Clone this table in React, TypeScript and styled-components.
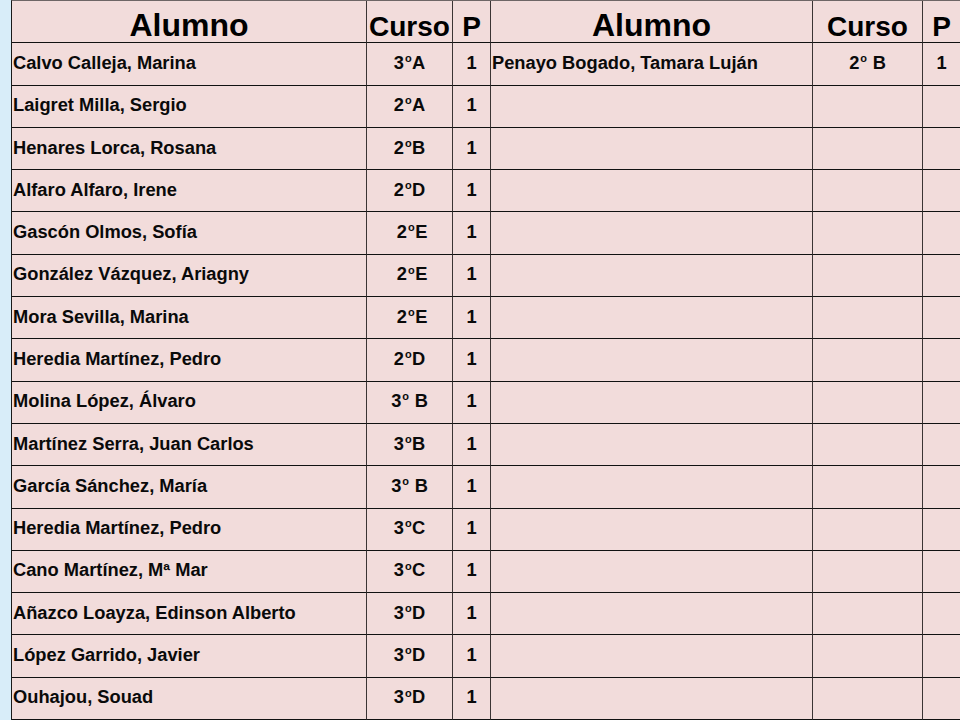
import React from "react";
import styled, { createGlobalStyle } from "styled-components";

const Global = createGlobalStyle`
  html, body { margin: 0; padding: 0; background: #f2dcdb; overflow: hidden; }
  body { font-family: "Liberation Sans", Arial, sans-serif; }
`;

const Page = styled.div`
  display: flex;
  width: 960px;
  height: 720px;
`;

const Strip = styled.div`
  width: 11px;
  flex: none;
  background: #d8edf9;
`;

const Table = styled.div`
  flex: 1;
  display: grid;
  grid-template-columns: 355px 86px 38px 322px 110px 37px;
  grid-template-rows: repeat(17, 1fr);
  height: 720px;
  box-sizing: border-box;
  border-left: 1px solid #1a1a1a;
  border-top: 1px solid #6e6666;
  background: #f2dcdb;
`;

const Cell = styled.div<{ $align?: "left" | "center"; $last?: boolean }>`
  box-sizing: border-box;
  display: flex;
  align-items: center;
  justify-content: ${(p) => (p.$align === "left" ? "flex-start" : "center")};
  padding-left: ${(p) => (p.$align === "left" ? "1px" : "0")};
  padding-bottom: 2px;
  border-right: ${(p) => (p.$last ? "none" : "1px solid #3b3434")};
  border-bottom: 1px solid #111;
  font-size: 18.3px;
  font-weight: bold;
  color: #0a0a0a;
  white-space: pre;
  overflow: hidden;
`;

const HeadCell = styled(Cell)<{ $big?: boolean }>`
  align-items: flex-end;
  padding-bottom: 1px;
  font-size: ${(p) => (p.$big ? "32px" : "28px")};
  line-height: 1;
  color: #000;
`;

const Text = styled.span`
  white-space: pre;
`;

const Sup = styled.span`
  font-size: 0.6em;
  position: relative;
  top: -0.62em;
  margin: 0 0.5px 0 1px;
`;

type Row = [string, string, string];

const left: Row[] = [
  ["Calvo Calleja, Marina", "3|A", "1"],
  ["Laigret Milla, Sergio", "2|A", "1"],
  ["Henares Lorca, Rosana", "2|B", "1"],
  ["Alfaro Alfaro, Irene", "2|D", "1"],
  ["Gascón Olmos, Sofía", " 2|E", "1"],
  ["González Vázquez, Ariagny", " 2|E", "1"],
  ["Mora Sevilla, Marina", " 2|E", "1"],
  ["Heredia Martínez, Pedro", "2|D", "1"],
  ["Molina López, Álvaro", "3| B", "1"],
  ["Martínez Serra, Juan Carlos", "3|B", "1"],
  ["García Sánchez, María", "3| B", "1"],
  ["Heredia Martínez, Pedro", "3|C", "1"],
  ["Cano Martínez, Mª Mar", "3|C", "1"],
  ["Añazco Loayza, Edinson Alberto", "3|D", "1"],
  ["López Garrido, Javier", "3|D", "1"],
  ["Ouhajou, Souad", "3|D", "1"],
];

const right: Row[] = [["Penayo Bogado, Tamara Luján", "2| B", "1"]];

const Course = ({ v }: { v: string }) => {
  if (!v) return null;
  const [a, b] = v.split("|");
  return (
    <Text>
      {a}
      <Sup>o</Sup>
      {b}
    </Text>
  );
};

export default function App() {
  const rows = left.map((l, i) => {
    const r: Row = right[i] ?? ["", "", ""];
    return (
      <React.Fragment key={i}>
        <Cell $align="left">{l[0]}</Cell>
        <Cell>
          <Course v={l[1]} />
        </Cell>
        <Cell>{l[2]}</Cell>
        <Cell $align="left">{r[0]}</Cell>
        <Cell>
          <Course v={r[1]} />
        </Cell>
        <Cell $last>{r[2]}</Cell>
      </React.Fragment>
    );
  });
  return (
    <>
      <Global />
      <Page>
        <Strip />
        <Table>
          <HeadCell $big>Alumno</HeadCell>
          <HeadCell>Curso</HeadCell>
          <HeadCell>P</HeadCell>
          <HeadCell $big>Alumno</HeadCell>
          <HeadCell>Curso</HeadCell>
          <HeadCell $last>P</HeadCell>
          {rows}
        </Table>
      </Page>
    </>
  );
}
